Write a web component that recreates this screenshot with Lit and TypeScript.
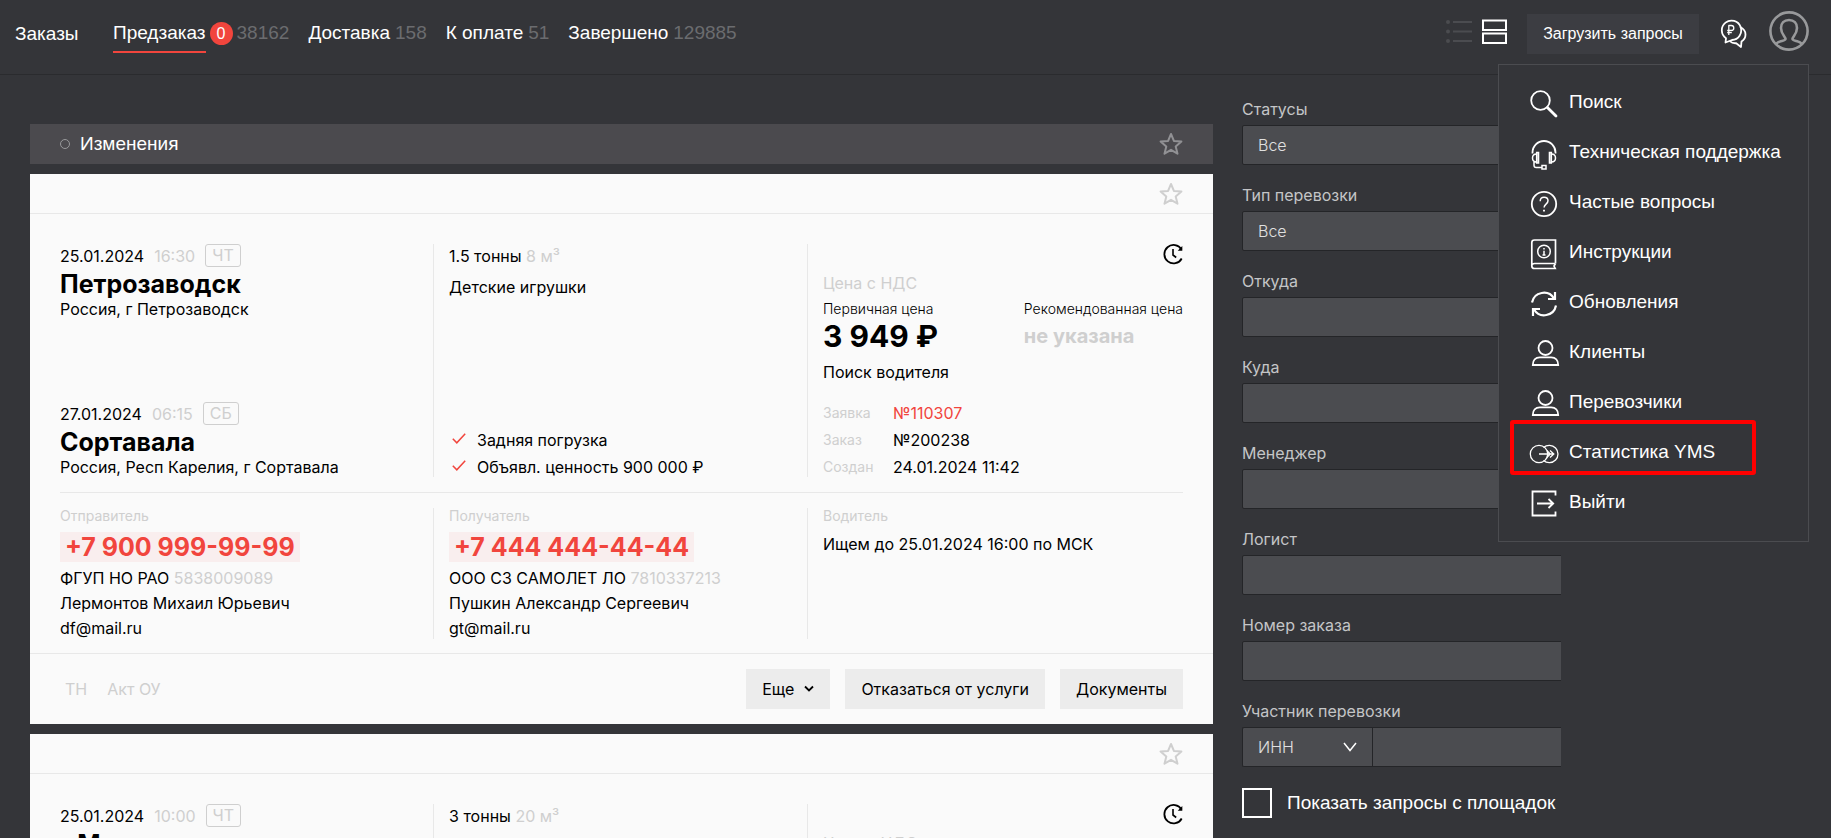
import { LitElement, html, css, svg, nothing } from "lit";
import { customElement, property, state } from "lit/decorators.js";

const icons: Record<string, unknown> = {
  search: svg`<circle cx="10.5" cy="10.5" r="9.3" stroke-width="1.8"/><path d="M17.4 17.4 26 26" stroke-width="2.8" stroke-linecap="round"/>`,
  support: svg`<path d="M2.5 13.5v-1a11.5 11.5 0 0 1 23 0v1" /><path d="M8.500 12.500H6.700v10.500H8.500zM19.500 12.500h1.800v10.500h-1.800z" stroke-width="1.600"/><path d="M6.700 14c-2.500 0-4.200 1.200-4.200 4s1.700 4 4.200 4M21.300 14c2.500 0 4.200 1.200 4.200 4s-1.700 4-4.200 4M4 22v3.200c0 1.500.800 2.300 2.300 2.300H12M12 25.500h4v3.600h-4z" stroke-width="1.500"/>`,
  faq: svg`<circle cx="14" cy="14" r="12.200"/><path d="M10.200 11.200c0-2.600 1.600-4 3.900-4s3.900 1.400 3.900 3.600c0 3.400-3.900 3.300-3.900 6.700" stroke-width="1.500"/><path d="M14 19.800v1.800" stroke-width="1.900"/>`,
  manual: svg`<path d="M4.500 0h21v23.500M25.500 23.500h-21c-1.600 0-2.700 1-2.700 2.500M4.500 0c-1.800 0-2.700 1-2.700 2.500V26c0 1.700 1 2.500 2.700 2.500h20.700l-1.200-2.500 1.500-2.500" stroke-width="1.700"/><circle cx="14" cy="11.500" r="6.300" stroke-width="1.500"/><path d="M14 8v1.500M14 10.800v4.200M12.500 15h3" stroke-width="1.500"/>`,
  updates: svg`<path d="M2 12.500A12 12 0 0 1 24 8.500M26 15.500A12 12 0 0 1 4 19.500" stroke-width="2.200"/><path d="M25 2v7h-7M3 26v-7h7" stroke-width="2.200"/>`,
  person: svg`<circle cx="15.500" cy="8" r="7"/><path d="M2.800 25c0-4.800 2.800-7.600 7-7.600h11.400c4.200 0 7 2.800 7 7.600z"/>`,
  yms: svg`<circle cx="9" cy="14" r="8.700" stroke-width="1.300"/><path d="M13.500 7.500A8.700 8.700 0 1 1 13.500 20.500" stroke-width="1.300"/><path d="M9 14h14.500M20 10.500l3.800 3.500-3.800 3.500M16.800 10.500l3.500 3.500-3.500 3.500" stroke-width="1.300"/>`,
  exit: svg`<path d="M25.500 5.500v-4h-23v24h23v-4" stroke-width="1.800"/><path d="M7 13.500h16M18.500 9l4.700 4.500-4.700 4.500" stroke-width="1.800"/>`,
};

const star = html`<svg class="star" viewBox="0 0 24 24" width="24" height="24" aria-hidden="true"><path d="M12 2l2.900 6.900 7.500.6-5.700 4.900 1.800 7.300L12 17.800l-6.500 3.900 1.800-7.300L1.600 9.500l7.500-.6z" fill="none" stroke="currentColor" stroke-width="2" stroke-linejoin="round"/></svg>`;

const tick = html`<svg viewBox="0 0 14 11" width="14" height="11" aria-hidden="true"><path d="M.8 5.800 4.800 9.800 13.200.8" fill="none" stroke="#f1453d" stroke-width="1.500"/></svg>`;

interface Point { date: string; time: string; day: string; city: string; address: string; }
interface Party { role: string; phone: string; company: string; inn: string; person: string; mail: string; }
interface Order { from: Point; to: Point; weight: string; volume: string; cargo: string; options: string[]; price: string; request: string; order: string; created: string; parties: Party[]; driver: string; }

const parties: Party[] = [
  { role: "Отправитель", phone: "+7 900 999-99-99", company: "ФГУП НО РАО", inn: "5838009089", person: "Лермонтов Михаил Юрьевич", mail: "df@mail.ru" },
  { role: "Получатель", phone: "+7 444 444-44-44", company: "ООО СЗ САМОЛЕТ ЛО", inn: "7810337213", person: "Пушкин Александр Сергеевич", mail: "gt@mail.ru" },
];

const orders: Order[] = [
  {
    from: { date: "25.01.2024", time: "16:30", day: "ЧТ", city: "Петрозаводск", address: "Россия, г Петрозаводск" },
    to: { date: "27.01.2024", time: "06:15", day: "СБ", city: "Сортавала", address: "Россия, Респ Карелия, г Сортавала" },
    weight: "1.5 тонны", volume: "8 м³", cargo: "Детские игрушки",
    options: ["Задняя погрузка", "Объявл. ценность 900 000 ₽"],
    price: "3 949 ₽", request: "№110307", order: "№200238", created: "24.01.2024 11:42",
    parties, driver: "Ищем до 25.01.2024 16:00 по МСК",
  },
  {
    from: { date: "25.01.2024", time: "10:00", day: "ЧТ", city: "г Москва", address: "Россия, г Москва" },
    to: { date: "27.01.2024", time: "06:15", day: "СБ", city: "Сортавала", address: "Россия, Респ Карелия, г Сортавала" },
    weight: "3 тонны", volume: "20 м³", cargo: "Детские игрушки",
    options: ["Задняя погрузка"],
    price: "3 949 ₽", request: "№110308", order: "№200239", created: "24.01.2024 11:42",
    parties, driver: "Ищем до 25.01.2024 16:00 по МСК",
  },
];

@customElement("top-bar")
class TopBar extends LitElement {
  static styles = css`
    :host { display: block; font: 400 19px/24px "Liberation Sans", Arial, sans-serif; color: #fff; }
    * { box-sizing: border-box; }
    .bar { display: flex; align-items: flex-start; height: 75px; padding: 0 22px 0 15px; border-bottom: 1px solid #2a2b2e; }
    .brand { color: #fff; text-decoration: none; width: 98px; padding-top: 22px; }
    .tabs { display: flex; gap: 19px; padding-top: 21px; }
    .tab { display: flex; align-items: flex-start; color: #fff; text-decoration: none; gap: 5px; }
    .name { padding-bottom: 6px; }
    .active .name { border-bottom: 2px solid #f1453d; }
    .active { gap: 4px; }
    .badge { display: grid; place-items: center; width: 23px; height: 23px; border-radius: 50%; background: #f1453d; font-size: 16px; margin-top: 1px; }
    .count { color: #6b6c6f; }
    .tools { display: flex; margin-left: auto; align-items: flex-start; padding-top: 11px; }
    button { border: 0; padding: 0; margin: 0; background: none; color: inherit; font: inherit; display: block; }
    .views { display: flex; gap: 9px; margin: 8px 20px 0 0; }
    .dim { color: #4b4c50; }
    .load { width: 172px; height: 40px; background: #3c3d42; font-size: 16px; margin: 3px 20px 0 0; }
    .chat { margin: 8px 22px 0 0; }
    .user { color: #98999b; }
    svg { display: block; }
  `;
  tabs = [
    { name: "Предзаказ", count: "38162", badge: "0" },
    { name: "Доставка", count: "158" },
    { name: "К оплате", count: "51" },
    { name: "Завершено", count: "129885" },
  ];
  render() {
    return html`<header class="bar">
      <a class="brand" href="#orders">Заказы</a>
      <nav class="tabs">
        ${this.tabs.map((t) => html`<a class="tab ${t.badge ? "active" : ""}" href="#tab"><span class="name">${t.name}</span>${t.badge ? html`<span class="badge">${t.badge}</span>` : nothing}<span class="count">${t.count}</span></a>`)}
      </nav>
      <div class="tools">
        <div class="views">
          <button class="dim" aria-label="Список"><svg width="26" height="26" viewBox="0 0 26 26"><path d="M7 3h19M7 12.500h19M7 22h19" stroke="currentColor" stroke-width="2"/><g fill="currentColor"><circle cx="2" cy="3" r="2"/><circle cx="2" cy="12.500" r="2"/><circle cx="2" cy="22" r="2"/></g></svg></button>
          <button aria-label="Карточки"><svg width="26" height="26" viewBox="0 0 26 26"><path d="M2 1.500h23v9.500h-23zM2 14.500h23v9.500h-23z" fill="none" stroke="currentColor" stroke-width="2"/></svg></button>
        </div>
        <button class="load">Загрузить запросы</button>
        <button class="chat" aria-label="Чат"><svg width="28" height="30" viewBox="0 0 28 30" fill="none" stroke="currentColor" stroke-width="1.800" stroke-linejoin="round"><path d="M6.500 23.500 7 19.300A9.700 9.700 0 1 1 13 21z"/><path d="M21 8c3 1.300 5.500 4 5.500 7.500 0 3-1.500 5.500-4 7l-.5 5.500-4.800-3.800c-2.500.3-4.700-.5-6.400-2"/><path d="M9.800 16V6.500h2.500a2.300 2.300 0 0 1 0 5H8.200M8.200 13.700h4.600" stroke-width="1.300"/></svg></button>
        <button class="user" aria-label="Профиль"><svg width="40" height="40" viewBox="0 0 40 40" fill="none" stroke="currentColor" stroke-width="2.600"><circle cx="20" cy="20" r="18.600"/><path d="M7 33c1-1 2-2 4-2.500 2.500-.8 5.500-1 5.500-2.500 0-2-4.500-5-4.500-11 0-5 3-8 8-8s8 3 8 8c0 6-4.500 9-4.500 11 0 1.500 3 1.700 5.500 2.500 2 .5 3 1.500 4 2.500"/></svg></button>
      </div>
    </header>`;
  }
}

@customElement("user-menu")
class UserMenu extends LitElement {
  static styles = css`
    :host { display: block; }
    *, ::after { box-sizing: border-box; }
    .menu { width: 311px; padding: 12px 11px 14px; border: 1px solid #4b4c50; background: #343539; margin: 0; list-style: none; font: 400 19px/24px "Liberation Sans", Arial, sans-serif; }
    .item { display: grid; grid-template-columns: 30px 1fr; column-gap: 9px; align-items: center; height: 50px; padding: 0 0 0 20px; color: #fff; text-decoration: none; white-space: nowrap; }
    .mark { position: relative; }
    .mark::after { content: ""; position: absolute; left: 0; top: -7px; width: 246px; height: 55px; border: 4px solid #f00; border-radius: 3px; }
    svg { display: block; margin-top: 3px; fill: none; stroke: currentColor; stroke-width: 1.800; overflow: visible; }
  `;
  items = [["search", "Поиск"], ["support", "Техническая поддержка"], ["faq", "Частые вопросы"], ["manual", "Инструкции"], ["updates", "Обновления"], ["person", "Клиенты"], ["person", "Перевозчики"], ["yms", "Статистика YMS"], ["exit", "Выйти"]];
  render() {
    return html`<ul class="menu">${this.items.map(([i, t]) => html`<li class=${i === "yms" ? "mark" : ""}><a class="item" href="#menu"><svg width="30" height="28" viewBox="0 0 30 28" aria-hidden="true">${icons[i]}</svg><span>${t}</span></a></li>`)}</ul>`;
  }
}

@customElement("order-card")
class OrderCard extends LitElement {
  static styles = css`
    :host { display: block; background: #fafafa; color: #000; font: 400 16px/24px "Inter", sans-serif; }
    * { box-sizing: border-box; }
    svg { display: block; }
    button { border: 0; margin: 0; padding: 0; background: none; font: inherit; color: inherit; }
    .head { display: flex; justify-content: flex-end; align-items: flex-start; height: 40px; padding: 8px 30px 0; border-bottom: 1px solid #e8e8e8; color: #cfcfcf; }
    .row { display: grid; grid-template-columns: 373fr 374fr 376fr; margin: 0 30px; }
    .main { padding: 30px 0 15px; border-bottom: 1px solid #e8e8e8; }
    .main .col { min-height: 233px; display: flex; flex-direction: column; justify-content: space-between; }
    .people { padding: 15px 0 14px; }
    .people .col { height: 131px; }
    .col + .col { border-left: 1px solid #e8e8e8; padding-left: 15px; }
    .when { display: flex; gap: 10px; height: 25px; }
    .muted { color: #cfcfcf; }
    .day { height: 23px; padding: 0 6px; line-height: 21px; border: 1px solid #cfcfcf; border-radius: 3px; color: #cfcfcf; }
    .city { margin: 0; font-size: 25px; font-weight: 700; line-height: 30px; }
    .address { line-height: 20px; }
    .cargo { margin-top: 7px; }
    .options { list-style: none; margin: 0; padding: 0 0 0 3px; display: grid; gap: 7px; line-height: 20px; }
    .options li { display: flex; align-items: center; gap: 11px; }
    .options svg { margin-bottom: 4px; }
    .top { display: flex; justify-content: flex-end; align-items: flex-start; height: 27px; }
    .prices { display: flex; justify-content: space-between; margin-top: 2px; }
    .small { font-size: 14px; font-weight: 300; }
    .price { font-size: 30px; font-weight: 700; line-height: 30px; }
    .none { font-size: 20px; font-weight: 700; line-height: 30px; color: #cfcfcf; }
    .status { margin-top: 9px; }
    .refs { display: grid; grid-template-columns: 70px 1fr; row-gap: 7px; margin: 0; line-height: 20px; }
    dt { color: #cfcfcf; font-size: 14px; }
    dd { margin: 0; }
    .red { color: #f1453d; text-decoration: none; }
    .role { color: #cfcfcf; font-size: 14px; line-height: 16px; margin-bottom: 8px; }
    .phone { display: block; width: fit-content; padding: 0 5px; background: #f9eeee; color: #f1453d; font-size: 25px; font-weight: 700; line-height: 30px; text-decoration: none; margin-bottom: 4px; }
    .line { line-height: 25px; }
    .foot { display: flex; align-items: center; height: 71px; padding: 0 30px; border-top: 1px solid #e8e8e8; gap: 15px; }
    .docs { display: flex; gap: 20px; margin-right: auto; padding-left: 5px; color: #cfcfcf; }
    .act { height: 40px; padding: 0 16px; background: #ececec; display: flex; align-items: center; gap: 10px; }
  `;
  @property({ attribute: false }) order!: Order;
  point(p: Point) {
    return html`<div>
      <div class="when"><span>${p.date}</span><span class="muted">${p.time}</span><span class="day">${p.day}</span></div>
      <h2 class="city">${p.city}</h2>
      <div class="address">${p.address}</div>
    </div>`;
  }
  render() {
    const o = this.order;
    return html`<article>
      <div class="head"><button aria-label="В избранное">${star}</button></div>
      <div class="row main">
        <div class="col">${this.point(o.from)}${this.point(o.to)}</div>
        <div class="col">
          <div><div>${o.weight} <span class="muted">${o.volume}</span></div><div class="cargo">${o.cargo}</div></div>
          <ul class="options">${o.options.map((x) => html`<li>${tick}${x}</li>`)}</ul>
        </div>
        <div class="col">
          <div>
            <div class="top"><button aria-label="История"><svg width="20" height="21" viewBox="0 0 20 21" fill="none" stroke="#000"><path d="M18.500 5.500A9.200 9.200 0 1 0 18.700 14.500" stroke-width="1.800"/><path d="M19.300 2v4.700h-4.600z" fill="#000" stroke="none"/><path d="M10 5v6l3.200 2.500" stroke-width="1.600"/></svg></button></div>
            <div class="muted">Цена с НДС</div>
            <div class="prices">
              <div><div class="small">Первичная цена</div><div class="price">${o.price}</div></div>
              <div><div class="small">Рекомендованная цена</div><div class="none">не указана</div></div>
            </div>
            <div class="status">Поиск водителя</div>
          </div>
          <dl class="refs">
            <dt>Заявка</dt><dd><a class="red" href="#request">${o.request}</a></dd>
            <dt>Заказ</dt><dd>${o.order}</dd>
            <dt>Создан</dt><dd>${o.created}</dd>
          </dl>
        </div>
      </div>
      <div class="row people">
        ${o.parties.map((p) => html`<div class="col">
          <div class="role">${p.role}</div>
          <a class="phone" href="tel:${p.phone}">${p.phone}</a>
          <div class="line">${p.company} <span class="muted">${p.inn}</span></div>
          <div class="line">${p.person}</div>
          <div class="line">${p.mail}</div>
        </div>`)}
        <div class="col"><div class="role">Водитель</div><div>${o.driver}</div></div>
      </div>
      <div class="foot">
        <div class="docs"><span>ТН</span><span>Акт ОУ</span></div>
        <button class="act">Еще <svg width="10" height="8" viewBox="0 0 10 8"><path d="M1 1.500 5 5.500 9 1.500" fill="none" stroke="#000" stroke-width="1.800"/></svg></button>
        <button class="act">Отказаться от услуги</button>
        <button class="act">Документы</button>
      </div>
    </article>`;
  }
}

@customElement("order-filters")
class OrderFilters extends LitElement {
  static styles = css`
    :host { display: block; overflow: hidden; font: 400 16px/24px "Inter", sans-serif; color: #c4c5c7; }
    * { box-sizing: border-box; }
    .form { display: flex; flex-direction: column; width: 340px; gap: 18px; }
    .label { display: block; height: 24px; }
    .field { display: flex; flex-direction: column; gap: 4px; }
    .input { width: 100%; height: 40px; padding: 0 15px; border: 1px solid #242528; border-radius: 2px; background: #4b4c50; color: #e0e0e0; font: 300 16px/24px "Inter", sans-serif; appearance: none; outline: 0; }
    .pair { display: grid; grid-template-columns: 130px 1fr; }
    .pick { position: relative; display: block; }
    .pick svg { position: absolute; right: 15px; top: 15px; pointer-events: none; }
    .pick .input { border-radius: 2px 0 0 2px; border-right: 0; }
    .pair > .input { border-radius: 0; }
    .check { display: flex; align-items: center; gap: 15px; color: #fff; font: 400 19px/24px "Liberation Sans", Arial, sans-serif; white-space: nowrap; margin-top: 3px; }
    .box { flex: none; appearance: none; width: 30px; height: 30px; margin: 0; border: 2px solid #fff; background: none; }
  `;
  fields = [["status", "Статусы", "Все"], ["type", "Тип перевозки", "Все"], ["from", "Откуда", ""], ["to", "Куда", ""], ["manager", "Менеджер", ""], ["logist", "Логист", ""], ["number", "Номер заказа", ""]];
  render() {
    return html`<form class="form">
      ${this.fields.map(([id, label, value]) => html`<div class="field"><label class="label" for=${id}>${label}</label>
        ${value ? html`<select class="input" id=${id}><option>${value}</option></select>` : html`<input class="input" id=${id} type="text">`}</div>`)}
      <div class="field"><label class="label" for="member">Участник перевозки</label>
        <div class="pair"><span class="pick"><select class="input" aria-label="Тип поиска"><option>ИНН</option></select><svg width="14" height="10" viewBox="0 0 14 10"><path d="M1 1 7 8.500 13 1" fill="none" stroke="#fff" stroke-width="1.500"/></svg></span><input class="input" id="member" type="text"></div>
      </div>
      <label class="check"><input class="box" type="checkbox">Показать запросы с площадок</label>
    </form>`;
  }
}

@customElement("app-root")
class AppRoot extends LitElement {
  static styles = css`
    :host { display: block; position: relative; height: 100vh; overflow: hidden; background: #343539; }
    * { box-sizing: border-box; }
    .page { display: grid; grid-template-columns: minmax(0, 1fr) 319px; column-gap: 29px; padding: 22px 270px 0 30px; align-items: start; }
    .list { display: flex; flex-direction: column; gap: 10px; padding-top: 27px; }
    .changes { display: flex; align-items: center; height: 40px; padding: 0 30px; background: #4b4a4e; color: #fff; font: 400 19px/24px "Liberation Sans", Arial, sans-serif; }
    .dot { width: 10px; height: 10px; border: 1px solid #98999b; border-radius: 50%; margin-right: 10px; }
    .fav { margin: 0 0 0 auto; border: 0; padding: 0; background: none; color: #919194; }
    .fav svg { display: block; }
    .drop { position: absolute; right: 22px; top: 64px; }
  `;
  @state() menuOpen = true;
  render() {
    return html`<top-bar></top-bar>
      <main class="page">
        <section class="list">
          <div class="changes"><span class="dot"></span>Изменения<button class="fav" aria-label="В избранное">${star}</button></div>
          ${orders.map((o) => html`<order-card .order=${o}></order-card>`)}
        </section>
        <order-filters></order-filters>
      </main>
      ${this.menuOpen ? html`<user-menu class="drop"></user-menu>` : nothing}`;
  }
}
